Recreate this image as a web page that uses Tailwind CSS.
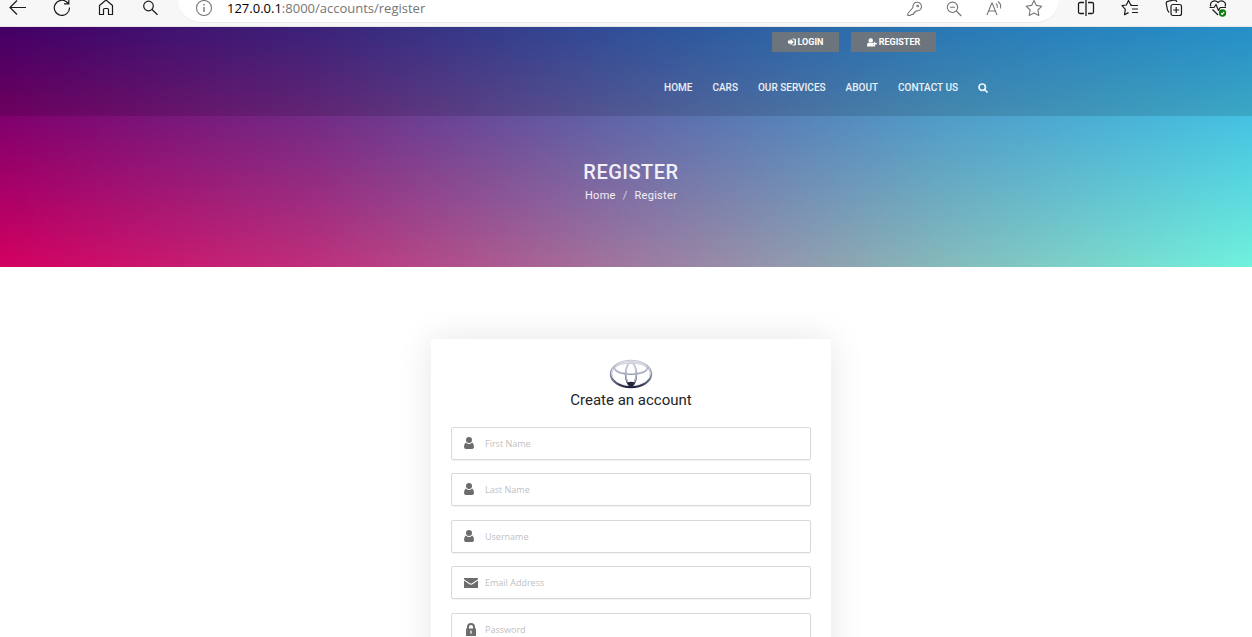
<!DOCTYPE html>
<html lang="en">
<head>
<meta charset="utf-8">
<meta name="viewport" content="width=device-width, initial-scale=1">
<title>Register</title>
<script src="https://cdn.jsdelivr.net/npm/@tailwindcss/browser@4"></script>
</head>
<body class="h-screen overflow-hidden bg-white font-['Roboto',sans-serif]">

<!-- Browser toolbar -->
<div class="flex h-[27px] items-start border-b border-[#e6e6e6] bg-[#f7f7f7] text-[#1b1b1b]">
  <div class="flex w-[178px] shrink-0 gap-[26px] pl-[9px]">
    <button type="button" aria-label="Back"><svg class="h-4 w-[18px]" viewBox="0 0 18 16" fill="none" stroke="currentColor" stroke-width="1.2"><path d="M17 7.5H1.5M8 .5l-7 7 7 7"/></svg></button>
    <button type="button" aria-label="Reload"><svg class="h-4 w-[18px]" viewBox="0 0 18 16" fill="none" stroke="currentColor" stroke-width="1.2"><path d="M16.5 7.5A7.6 7.6 0 1 1 14 2.2L15.5 3.500M15.800-1v4.800H11"/></svg></button>
    <button type="button" aria-label="Home"><svg class="h-4 w-[18px]" viewBox="0 0 18 16" fill="none" stroke="currentColor" stroke-width="1.2" stroke-linejoin="round"><path d="M2.500 5.500 9 0l6.500 5.500v9h-4v-5a1 1 0 0 0-1-1h-3a1 1 0 0 0-1 1v5h-4z"/></svg></button>
    <button type="button" aria-label="Search"><svg class="h-4 w-[18px]" viewBox="0 0 18 16" fill="none" stroke="currentColor" stroke-width="1.2"><circle cx="7.500" cy="6" r="4.800"/><path d="m11 9.500 5.500 5.300"/></svg></button>
  </div>
  <div class="flex h-[23px] min-w-0 flex-1 items-start justify-between rounded-b-full border-b border-[#ebebeb] bg-white pr-[16px] pl-[17px] text-[#757575]">
    <div class="flex gap-[14px]">
      <button type="button" aria-label="Site information"><svg class="h-[17px] w-[18px]" viewBox="0 0 18 17" fill="none" stroke="currentColor" stroke-width="1.100"><circle cx="9" cy="8" r="7.500"/><path d="M9 7v5M9 4v1.500" stroke-width="1.400"/></svg></button>
      <span class="font-['Open_Sans',sans-serif] text-[13px] leading-[17px] whitespace-nowrap"><span class="text-black">127.0.0.1</span>:8000/accounts/register</span>
    </div>
    <div class="flex gap-[22px]">
      <button type="button" aria-label="Passwords"><svg class="h-4 w-[18px]" viewBox="0 0 18 16" fill="none" stroke="currentColor" stroke-width="1.100" stroke-linejoin="round"><path d="M8 6.500a4.300 4.300 0 1 1 3.500 3.300L9.800 11v1H8.300v1.500H6.500L5 14.500H2.800V12.500z"/><circle cx="12.700" cy="5" r=".8"/></svg></button>
      <button type="button" aria-label="Zoom out"><svg class="h-4 w-[18px]" viewBox="0 0 18 16" fill="none" stroke="currentColor" stroke-width="1.100"><circle cx="7.500" cy="6.300" r="5.200"/><path d="m11.300 10 5 5M5 6.300h5"/></svg></button>
      <button type="button" aria-label="Read aloud"><svg class="h-4 w-[18px]" viewBox="0 0 18 16" fill="none" stroke="currentColor" stroke-width="1.100"><path d="M2 14 6.800 2h.4L12 14M3.800 10h6.400M11 2.500q2 1.700 1.300 4.500M13 .5q3.500 2.500 2.500 7"/></svg></button>
      <button type="button" aria-label="Add to favourites"><svg class="h-[17px] w-[18px]" viewBox="0 0 18 17" fill="none" stroke="currentColor" stroke-width="1.100" stroke-linejoin="round"><path d="m9 .5 2.400 4.900 5.400.8-3.900 3.800.9 5.400L9 12.900l-4.800 2.500.9-5.400L1.200 6.200l5.400-.8z"/></svg></button>
    </div>
  </div>
  <div class="flex w-[193px] shrink-0 gap-[26px] pl-[18px]">
    <button type="button" aria-label="Split screen"><svg class="h-[17px] w-[18px]" viewBox="0 0 18 17" fill="none" stroke="currentColor" stroke-width="1.300"><path d="M7 2.500H3A1.500 1.500 0 0 0 1.500 4v8A1.500 1.500 0 0 0 3 13.500h4M11 2.500h4A1.500 1.500 0 0 1 16.500 4v8a1.500 1.500 0 0 1-1.500 1.500h-4M9 0v16"/></svg></button>
    <button type="button" aria-label="Favourites"><svg class="h-[17px] w-[18px]" viewBox="0 0 18 17" fill="none" stroke="currentColor" stroke-width="1.200" stroke-linejoin="round"><path d="M10.500 4.500 9.800 5 7.500.5 5.300 5 1 5.700l3.300 3.600-.8 5.500 4-2.200M9.500 5.500H17M11 9h6M11 12.500h6"/></svg></button>
    <button type="button" aria-label="Collections"><svg class="h-[17px] w-[18px]" viewBox="0 0 18 17" fill="none" stroke="currentColor" stroke-width="1.200"><rect x="6" y="4.500" width="10.500" height="11" rx="2"/><path d="M11.200 7v6M8.200 10h6M4 12.500 2.500 10 1.200 3.500A2 2 0 0 1 2.800 1.300L9 0q2.500 0 2.700 2"/></svg></button>
    <button type="button" aria-label="Browser essentials"><svg class="h-[17px] w-[18px]" viewBox="0 0 18 17" fill="none" stroke="currentColor" stroke-width="1.200" stroke-linejoin="round"><path d="M2 6.500C0 2 5.500-1 9 2.500 12.500-1 18 2 16 6.500M.5 7.500H5L7 4.500l2.500 6 1.800-3H17M3.500 9.500 9 15"/><circle cx="13.500" cy="13" r="3.700" fill="#107c10" stroke="none"/><path d="m12 13.200 1.200 1.100 2-2.400" stroke="#fff"/></svg></button>
  </div>
</div>

<!-- Banner: a left-to-right blend for the top edge, fading into another for the bottom edge -->
<header class="relative isolate bg-[linear-gradient(to_right,#4e0075,#45288c_25%,#375cb0_50%,#308ad0_75%,#2ca5e6)] text-white">
  <div class="absolute inset-0 -z-10 bg-[linear-gradient(to_right,#d40060,#bf2f7b_25%,#a0789f_50%,#86b9ba_75%,#70f2dc)] [mask-image:linear-gradient(to_bottom,transparent,black)]"></div>
  <div class="bg-black/13 pt-[5px] pl-[10px]">
    <div class="mx-auto flex h-[84px] max-w-[714px] flex-col items-end">
      <div class="mr-[52px] flex gap-3 text-[9px] leading-5 font-bold">
        <a href="#" class="flex h-5 w-[67px] items-center justify-center gap-[2px] rounded-[1px] bg-[#6c757d]"><svg class="h-2 w-2" viewBox="0 0 16 16" fill="currentColor"><path d="M0 5h5V1.500L11.500 8 5 14.500V11H0zM9 1h4a3 3 0 0 1 3 3v8a3 3 0 0 1-3 3H9v-2h4V3H9z"/></svg>LOGIN</a>
        <a href="#" class="flex h-5 w-[85px] items-center justify-center gap-[2px] rounded-[1px] bg-[#6c757d]"><svg class="h-[9px] w-[10px]" viewBox="0 0 20 18" fill="currentColor"><circle cx="7.500" cy="5" r="4.500"/><path d="M0 17c0-5 1.500-8 3.500-8q4 3 8 0l1 1v3.500h3V17zM14 7.500h2.500V10H20v2.500h-3.500V16H14v-3.500h-2V10h2z"/></svg>REGISTER</a>
      </div>
      <nav class="mt-[26px] flex items-center gap-5 text-[10px] leading-5 font-medium text-white/90">
        <a href="#">HOME</a><a href="#">CARS</a><a href="#">OUR SERVICES</a><a href="#">ABOUT</a><a href="#">CONTACT US</a>
        <button type="button" aria-label="Search"><svg class="h-[10px] w-[10px]" viewBox="0 0 10 10" fill="none" stroke="currentColor" stroke-width="1.700"><circle cx="4.200" cy="4.200" r="3.200"/><path d="m6.500 6.500 3 3"/></svg></button>
      </nav>
    </div>
  </div>
  <div class="flex h-[151px] flex-col items-center pt-[44px] pl-[10px] text-white/90">
    <h1 class="text-[20px] leading-6 font-medium tracking-wide">REGISTER</h1>
    <div class="mt-1 flex gap-[7px] text-[11px] leading-4 tracking-wide"><a href="#">Home</a><span class="text-white/70">/</span><span>Register</span></div>
  </div>
</header>

<main class="pt-[72px] pl-[10px]">
  <form class="mx-auto flex max-w-[400px] flex-col rounded-[3px] bg-white px-5 pt-5 pb-8 shadow-[0_0_35px_rgba(0,0,0,0.1)]">
    <svg class="mx-auto h-[30px] w-[44px]" viewBox="0 0 44 30" fill="none" role="img" aria-label="Toyota">
      <defs><linearGradient id="chrome" x1="0" y1="0" x2="0" y2="1"><stop offset="0" stop-color="#c3c6d2"/><stop offset=".5" stop-color="#858ba8"/><stop offset=".8" stop-color="#5c627f"/><stop offset="1" stop-color="#20243a"/></linearGradient>
      <linearGradient id="silver" x1="0" y1="0" x2="0" y2="1"><stop offset="0" stop-color="#c9ccd6"/><stop offset="1" stop-color="#8b90a8"/></linearGradient></defs>
      <ellipse cx="22" cy="15" rx="20" ry="13" stroke="url(#chrome)" stroke-width="2.400"/>
      <ellipse cx="22" cy="14.300" rx="19.600" ry="12.300" stroke="#e8eaf2" stroke-width=".9"/>
      <ellipse cx="22" cy="9.300" rx="16" ry="5.800" stroke="url(#silver)" stroke-width="1.900"/>
      <ellipse cx="22" cy="9" rx="15.800" ry="5.500" stroke="#f1f2f7" stroke-width=".7"/>
      <ellipse cx="22" cy="15" rx="5.300" ry="11.500" stroke="url(#chrome)" stroke-width="1.900"/>
      <ellipse cx="22" cy="14.500" rx="5.100" ry="11.200" stroke="#eceef5" stroke-width=".7"/>
      <path d="M18.300 23.500q3.700-1.500 7.400 0l-2.200 3.700h-3z" fill="#20243a"/>
    </svg>
    <h2 class="text-center text-[15px] leading-[22px] text-[#212529]">Create an account</h2>
    <div class="mt-4 flex flex-col gap-[14px] text-[#6c6c6c]">
      <div class="flex flex-col gap-[13px]">
        <label class="flex h-[33px] items-center rounded-[2px] border border-[#d9d9d9] pl-3 shadow-[0_1px_1px_rgba(0,0,0,0.05)]"><svg class="mb-[2px] h-3 w-[10px] shrink-0" viewBox="0 0 10 12" fill="currentColor"><circle cx="5" cy="3" r="3"/><path d="M1.800 5.500Q5 8.500 8.200 5.500 10 6.500 10 10q0 2-2 2H2q-2 0-2-2 0-3.500 1.800-4.500"/></svg><input type="text" aria-label="First Name" placeholder="First Name" class="ml-[11px] w-full font-['Open_Sans',sans-serif] text-[9px] outline-none placeholder:text-[#bfbfbf]"></label>
        <label class="flex h-[33px] items-center rounded-[2px] border border-[#d9d9d9] pl-3 shadow-[0_1px_1px_rgba(0,0,0,0.05)]"><svg class="mb-[2px] h-3 w-[10px] shrink-0" viewBox="0 0 10 12" fill="currentColor"><circle cx="5" cy="3" r="3"/><path d="M1.800 5.500Q5 8.500 8.200 5.500 10 6.500 10 10q0 2-2 2H2q-2 0-2-2 0-3.500 1.800-4.500"/></svg><input type="text" aria-label="Last Name" placeholder="Last Name" class="ml-[11px] w-full font-['Open_Sans',sans-serif] text-[9px] outline-none placeholder:text-[#bfbfbf]"></label>
      </div>
      <div class="flex flex-col gap-[13px]">
        <label class="flex h-[33px] items-center rounded-[2px] border border-[#d9d9d9] pl-3 shadow-[0_1px_1px_rgba(0,0,0,0.05)]"><svg class="mb-[2px] h-3 w-[10px] shrink-0" viewBox="0 0 10 12" fill="currentColor"><circle cx="5" cy="3" r="3"/><path d="M1.800 5.500Q5 8.500 8.200 5.500 10 6.500 10 10q0 2-2 2H2q-2 0-2-2 0-3.500 1.800-4.500"/></svg><input type="text" aria-label="Username" placeholder="Username" class="ml-[11px] w-full font-['Open_Sans',sans-serif] text-[9px] outline-none placeholder:text-[#bfbfbf]"></label>
        <label class="flex h-[33px] items-center rounded-[2px] border border-[#d9d9d9] pl-3 shadow-[0_1px_1px_rgba(0,0,0,0.05)]"><svg class="h-[10px] w-[14px] shrink-0" viewBox="0 0 14 10" fill="currentColor"><path d="M0 0h14v1.200L8.500 5Q7 6 5.500 5L0 1.200zM0 2.600 5 6q2 1.300 4 0l5-3.400V10H0z"/></svg><input type="email" aria-label="Email Address" placeholder="Email Address" class="ml-[7px] w-full font-['Open_Sans',sans-serif] text-[9px] outline-none placeholder:text-[#bfbfbf]"></label>
      </div>
      <label class="flex h-[33px] items-center rounded-[2px] border border-[#d9d9d9] pl-[14px] shadow-[0_1px_1px_rgba(0,0,0,0.05)]"><svg class="h-[13px] w-[10px] shrink-0" viewBox="0 0 10 13" fill="currentColor"><path fill-rule="evenodd" d="M1 5.500V4a4 4 0 0 1 8 0v1.500h1V13H0V5.500zM3 5.500h4V4a2 2 0 0 0-4 0zM4.400 7.500v3.300h1.200V7.500z"/></svg><input type="password" aria-label="Password" placeholder="Password" class="ml-[9px] w-full font-['Open_Sans',sans-serif] text-[9px] outline-none placeholder:text-[#bfbfbf]"></label>
    </div>
  </form>
</main>
</body>
</html>
